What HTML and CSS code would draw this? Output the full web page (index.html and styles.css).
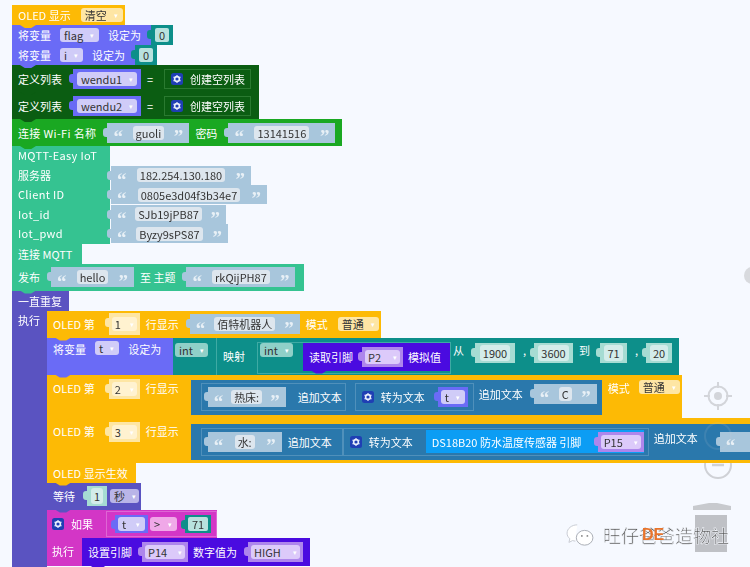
FILE: index.html
```html
<!DOCTYPE html>
<html lang="zh-CN">
<head>
    <meta charset="UTF-8" />
    <title>Mixly</title>
    <link rel="stylesheet" href="styles.css">
</head>
<body>

<svg class="defs" width="0" height="0">
    <symbol id="gear" viewBox="0 0 12 12">
        <rect width="12" height="12" rx="2.5" fill="#1f3fb4"/>
        <circle cx="6" cy="6" r="2.4" fill="none" stroke="#e8eefc" stroke-width="1.6"/>
        <path d="M6 2v1.4M6 8.6V10M2.500 4l1.200.7M8.300 7.300l1.200.7M2.500 8l1.200-.7M8.300 4.700l1.200-.7" stroke="#e8eefc" stroke-width="1.1"/>
    </symbol>
</svg>

<svg class="ctl minus" viewBox="0 0 30 30"><circle cx="15" cy="15" r="13" fill="none" stroke="#cfd1d6" stroke-width="2"/><path d="M9 15h12" stroke="#cfd1d6" stroke-width="2.500"/></svg>

<div class="ws">
    <div class="stack">
        <div class="blk yellow r20 w113"><span>OLED 显示</span><span class="dd y-dd ml10">清空</span></div>
        <div class="blk purple r20"><span>将变量</span><span class="dd p-dd ml8">flag</span><span class="ml8">设定为</span>
            <span class="num teal ml-end"><b>0</b></span></div>
        <div class="blk purple r20"><span>将变量</span><span class="dd p-dd ml8">i</span><span class="ml8">设定为</span>
            <span class="num teal ml-end"><b>0</b></span></div>
        <div class="blk dgreen r27 w247"><span>定义列表</span><span class="var ml11"><span class="dd p-dd">wendu1</span></span><span class="eq">=</span>
            <span class="outline dg-line"><svg class="gear"><use href="#gear"/></svg><span>创建空列表</span></span></div>
        <div class="blk dgreen r27 w247"><span>定义列表</span><span class="var ml11"><span class="dd p-dd">wendu2</span></span><span class="eq">=</span>
            <span class="outline dg-line"><svg class="gear"><use href="#gear"/></svg><span>创建空列表</span></span></div>
        <div class="blk green r27 w330"><span class="ls">连接 Wi-Fi 名称</span><span class="str ml11 w82"><i>“</i><em>guoli</em><i>”</i></span><span class="ml6">密码</span><span class="str ml11 w107"><i>“</i><em>13141516</em><i>”</i></span></div>

        <div class="mqtt">
            <div class="mq-row"><span class="mq-label ls">MQTT-Easy IoT</span></div>
            <div class="mq-row"><span class="mq-label">服务器</span><span class="str flat w140"><i>“</i><em>182.254.130.180</em><i>”</i></span></div>
            <div class="mq-row"><span class="mq-label ls">Client ID</span><span class="str flat w156"><i>“</i><em>0805e3d04f3b34e7</em><i>”</i></span></div>
            <div class="mq-row"><span class="mq-label ls">Iot_id</span><span class="str flat w115"><i>“</i><em>SJb19jPB87</em><i>”</i></span></div>
            <div class="mq-row"><span class="mq-label ls">Iot_pwd</span><span class="str flat w117"><i>“</i><em>Byzy9sPS87</em><i>”</i></span></div>
        </div>
        <div class="blk mint r20 w70"><span>连接 MQTT</span></div>
        <div class="blk mint r27 w292"><span>发布</span><span class="str ml11 w83"><i>“</i><em>hello</em><i>”</i></span><span class="ml6">至 主题</span><span class="str ml11 w109"><i>“</i><em>rkQijPH87</em><i>”</i></span></div>

        <div class="blk indigo r20 w57"><span>一直重复</span></div>
        <div class="loop">
            <div class="arm"><span>执行</span></div>
            <div class="stack">
                <div class="blk yellow r27 w334"><span>OLED 第</span><span class="val y-val ml14"><span class="dd y-dd">1</span></span><span class="ml6">行显示</span><span class="str ml11 w110"><i>“</i><em>佰特机器人</em><i>”</i></span><span class="ml6">模式</span><span class="dd y-dd ml10 w41">普通</span></div>

                <div class="blk purple tall37">
                    <span class="lift">将变量</span><span class="dd p-dd ml8 lift">t</span><span class="ml8 lift">设定为</span>
                    <div class="map">
                        <span class="dd t-dd">int</span>
                        <span class="split"></span>
                        <span class="map-label">映射</span>
                        <span class="outline t-line"><span class="dd t-dd">int</span>
                            <span class="blk violet pin"><span>读取引脚</span><span class="val v-val ml9 w41"><span class="dd v-dd">P2</span></span><span class="ml5">模拟值</span></span></span>
                        <span class="from">从</span><span class="val t-val ml11 w40"><b>1900</b></span><span class="dot">,</span><span class="val t-val w39"><b>3600</b></span><span class="to">到</span><span class="val t-val ml10 w27"><b>71</b></span><span class="dot">,</span><span class="val t-val w26"><b>20</b></span>
                    </div>
                </div>

                <div class="blk yellow tall43 w635"><span class="lift4">OLED 第</span><span class="val y-val slim ml14 lift4"><span class="dd y-dd">2</span></span><span class="ml6 lift4">行显示</span>
                    <div class="text-chain w411">
                        <span class="outline b-line w145"><span class="str w78"><i>“</i><em>热床:</em><i>”</i></span><span class="ml12">追加文本</span></span>
                        <span class="outline b-line w119 ml8"><svg class="gear"><use href="#gear"/></svg><span class="ml7">转为文本</span><span class="var small ml13"><span class="dd p-dd">t</span></span></span>
                        <span class="ml5 chain-up">追加文本</span><span class="str ml11 w63 chain-up"><i>“</i><em>C</em><i>”</i></span>
                    </div>
                    <span class="ml6 lift4">模式</span><span class="dd y-dd ml9 lift4 w41">普通</span>
                </div>

                <div class="blk yellow tall45 wide"><span class="lift4">OLED 第</span><span class="val y-val slim ml14 lift4"><span class="dd y-dd">3</span></span><span class="ml6 lift4">行显示</span>
                    <div class="text-chain wide-chain">
                        <span class="outline b-line w142"><span class="str w74"><i>“</i><em>水:</em><i>”</i></span><span class="ml6">追加文本</span></span>
                        <span class="outline b-line w306"><svg class="gear"><use href="#gear"/></svg><span class="ml7">转为文本</span><span class="sensor ml13"><span>DS18B20 防水温度传感器 引脚</span><span class="val v-val w46"><span class="dd v-dd">P15</span></span></span></span>
                        <span class="ml5 chain-up">追加文本</span><span class="str ml22 w82"><i>“</i><em>&nbsp;</em></span>
                    </div>
                </div>

                <div class="blk yellow r20 w89"><span>OLED 显示生效</span></div>
                <div class="blk indigo r27 w94"><span>等待</span><span class="val t-val ml12 w20"><b>1</b></span><span class="dd i-dd ml3 w29">秒</span></div>
                <div class="ifblk">
                    <div class="if-head"><svg class="gear"><use href="#gear"/></svg><span class="ml7">如果</span>
                        <span class="outline m-line"><span class="var t-var"><span class="dd p-dd">t</span></span><span class="dd m-dd ml2 w27">&gt;</span><span class="num teal small-num"><b>71</b></span></span></div>
                    <div class="if-body">
                        <span class="if-arm">执行</span>
                        <div class="blk violet r28 w228"><span>设置引脚</span><span class="val v-val ml10 w46"><span class="dd v-dd">P14</span></span><span class="ml5">数字值为</span><span class="val v-val ml11 w55"><span class="dd v-dd">HIGH</span></span></div>
                    </div>
                </div>
            </div>
        </div>
    </div>
</div>

<svg class="ctl locate" viewBox="0 0 30 30"><circle cx="15" cy="15" r="9.500" fill="none" stroke="#d3d5da" stroke-width="2"/><circle cx="15" cy="15" r="4" fill="#d3d5da"/><path d="M15 1v6M15 23v6M1 15h6M23 15h6" stroke="#d3d5da" stroke-width="2"/></svg>
<svg class="ctl plus" viewBox="0 0 30 30"><circle cx="15" cy="15" r="13" fill="none" stroke="#c9cbd0" stroke-width="2"/></svg>
<div class="side-knob"></div>
<svg class="ctl trash" viewBox="0 0 40 50"><path d="M1 4l16-3h8l14 3v4H1z" fill="#c8cace"/><rect x="3" y="13" width="32" height="37" fill="#bfc1c6"/></svg>
<div class="mark">
    <svg class="wx" viewBox="0 0 30 26"><path d="M12 2C6 2 1 6 1 11c0 2.500 1 4.500 3 6l-1 4 4-2c1 .4 2 .5 3 .6" fill="#fff" stroke="#c4c8d0"/><ellipse cx="20" cy="16" rx="9" ry="8" fill="#fff" stroke="#a4a8b0"/><circle cx="17" cy="14" r="1" fill="#888"/><circle cx="23" cy="14" r="1" fill="#888"/></svg>
    <span class="mark-text">旺仔爸爸造物社</span>
    <span class="mark-de">DE</span>
</div>

</body>
</html>
```

FILE: styles.css
```css
body {
    margin: 0;
    width: 750px;
    height: 567px;
    overflow: hidden;
    position: relative;
    background: #f6f9ff;
    font-family: "Noto Sans CJK SC", "Noto Sans", sans-serif;
    font-size: 11px;
    color: #fff;
}
.defs {
    position: absolute;
}
.ws {
    position: relative;
    padding: 5px 0 0 12px;
    height: 562px;
    overflow: hidden;
    filter: blur(0.35px);
}
.stack {
    display: flex;
    flex-direction: column;
    align-items: flex-start;
}

/* blocks */
.blk {
    display: flex;
    align-items: center;
    padding: 0 6px;
    box-sizing: border-box;
    position: relative;
    white-space: nowrap;
    flex-shrink: 0;
}
.blk::after {
    content: "";
    position: absolute;
    left: 8px;
    bottom: -3px;
    width: 16px;
    height: 3px;
    background: inherit;
    clip-path: polygon(0 0, 100% 0, 70% 100%, 30% 100%);
    z-index: 2;
}
.r20 { height: 20px; }
.r27 { height: 27px; }
.r28 { height: 28px; }
.tall37 { height: 37px; padding-right: 0; align-items: flex-start; padding-top: 4px; width: 632px; }
.tall43 { height: 43px; }
.tall45 { height: 45px; }
.w20 { width: 20px; }
.w26 { width: 26px; }
.w27 { width: 27px; }
.w29 { width: 29px; }
.w39 { width: 39px; }
.w40 { width: 40px; }
.w41 { width: 41px; }
.w46 { width: 46px; }
.w55 { width: 55px; }
.w57 { width: 57px; }
.w63 { width: 63px; }
.w70 { width: 70px; }
.w74 { width: 74px; }
.w78 { width: 78px; }
.w82 { width: 82px; }
.w83 { width: 83px; }
.w89 { width: 89px; }
.w94 { width: 94px; }
.w107 { width: 107px; }
.w109 { width: 109px; }
.w110 { width: 110px; }
.w113 { width: 113px; }
.w115 { width: 115px; }
.w117 { width: 117px; }
.w119 { width: 119px; }
.w140 { width: 140px; }
.w142 { width: 142px; }
.w145 { width: 145px; }
.w156 { width: 156px; }
.w228 { width: 228px; }
.w247 { width: 247px; }
.w292 { width: 292px; }
.w306 { width: 306px; }
.w330 { width: 330px; }
.w334 { width: 334px; }
.w411 { width: 411px; }
.w635 { width: 635px; }
.wide { width: 720px; }

.yellow { background: #fdba05; }
.purple { background: #6a6bf6; }
.dgreen { background: #0b5d12; }
.green { background: #1aa822; }
.mint { background: #35c391; }
.indigo { background: #5a53c1; }
.violet { background: #4a0be0; }

.ml2 { margin-left: 2px; }
.ml3 { margin-left: 3px; }
.ml5 { margin-left: 5px; }
.ml6 { margin-left: 6px; }
.ml7 { margin-left: 7px; }
.ml8 { margin-left: 9px; }
.ml9 { margin-left: 9px; }
.ml10 { margin-left: 10px; }
.ml11 { margin-left: 11px; }
.ml12 { margin-left: 12px; }
.ml13 { margin-left: 13px; }
.ml14 { margin-left: 14px; }
.ml22 { margin-left: 22px; }
.ls { letter-spacing: 0.35px; }
.lift { margin-top: -1px; }
.lift4 { align-self: flex-start; margin-top: 5px; }
.val.lift4 { margin-top: 4px; }

/* dropdown fields */
.dd {
    display: inline-flex;
    align-items: center;
    justify-content: space-between;
    box-sizing: border-box;
    height: 14px;
    padding: 0 5px 0 4px;
    border-radius: 3px;
    color: #333;
    gap: 7px;
    font-size: 11px;
}
.dd::after {
    content: "▾";
    font-size: 7px;
    color: #fff;
}
.y-dd { background: #fee6a4; }
.p-dd { background: #d0ccf8; }
.t-dd { background: #8fd0c8; }
.v-dd { background: #dccafa; }
.i-dd { background: #b9b5e8; }
.m-dd { background: #f0a8e8; }
.val .y-dd { background: #fff2d0; }

/* value sockets */
.val, .var, .num, .str {
    display: inline-flex;
    align-items: center;
    justify-content: center;
    position: relative;
    flex-shrink: 0;
    box-sizing: border-box;
}
.val::before, .var::before, .num::before, .str::before {
    content: "";
    position: absolute;
    left: -4px;
    top: 5px;
    width: 4px;
    height: 9px;
    border-radius: 3px 0 0 3px;
    background: inherit;
}
.val { height: 20px; padding: 0 3px; }
.val b, .num b { font-weight: 400; color: #333; }
.val .dd { padding: 0 3px; gap: 4px; }
.y-val { height: 22px; background: #fee6a4; width: 31px; }
.y-val.slim { height: 20px; }
.y-val .dd { width: 25px; }
.v-val { background: #ae86ec; }
.v-val .dd { width: 100%; }
.t-val { background: #a6dcd3; }
.t-val b { background: #d3ecea; padding: 0 3px; border-radius: 3px; }
.var { height: 20px; background: #6a6bf6; padding: 0 4px; width: 68px; }
.var .dd { width: 100%; }
.var.small { width: 30px; height: 20px; padding: 0 3px; }
.var.t-var { width: 33px; height: 18px; padding: 0 3px; }
.num { align-self: stretch; padding: 0 4px; width: 22px; }
.teal { background: #0d8f8a; }
.num b { background: #b8e2de; width: 14px; height: 14px; line-height: 14px; text-align: center; border-radius: 2px; }
.ml-end { margin-left: 10px; margin-right: -6px; }
.small-num { width: 26px; align-self: center; height: 18px; margin-left: 8px; padding: 0 3px; }
.small-num b { width: 20px; }

/* strings */
.str {
    height: 20px;
    background: #a8c6dc;
    justify-content: space-between;
    padding: 0 6px;
}
.str i {
    font-family: "Liberation Serif", serif;
    font-style: normal;
    font-weight: 700;
    font-size: 19px;
    line-height: 19px;
    height: 11px;
    color: #e8f0f6;
}
.str em {
    font-style: normal;
    color: #333;
    background: #dde6ee;
    border-radius: 3px;
    padding: 0 3px;
    height: 14px;
    line-height: 14px;
}
.flat { height: 19px; }

/* mqtt block */
.mqtt {
    display: flex;
    flex-direction: column;
    align-items: flex-start;
    width: 260px;
}
.mq-row {
    display: flex;
    height: 19.500px;
    align-items: stretch;
}
.mq-label {
    width: 98px;
    padding-left: 6px;
    box-sizing: border-box;
    background: #35c391;
    line-height: 19px;
}
.mq-row .str { margin-left: 1px; }

/* outlined statement inputs */
.eq {
    margin: 0 11px 0 6px;
}
.outline {
    display: inline-flex;
    align-items: center;
    box-sizing: border-box;
    border: 1px solid;
    flex-shrink: 0;
}
.dg-line { border-color: #2a7a30; height: 20px; width: 87px; gap: 7px; padding-left: 6px; }
.t-line {
    border-color: #3eaaa4;
    height: 32px;
    align-items: flex-start;
    padding-left: 2px;
    margin: -1px 0 0 12px;
    width: 194px;
}
.b-line { border-color: #4f90bb; height: 28px; padding-left: 6px; }
.m-line { border-color: #de66d4; height: 26px; width: 111px; padding-left: 8px; margin-left: 13px; }
.gear {
    width: 12px;
    height: 12px;
    flex-shrink: 0;
}

/* map block */
.map {
    background: #0d8f8a;
    display: flex;
    align-items: flex-start;
    margin: -4px 0 0 auto;
    height: 37px;
    width: 506px;
    padding: 5px 0 0 2px;
    box-sizing: border-box;
    white-space: nowrap;
    flex-shrink: 0;
}
.split {
    width: 1px;
    height: 37px;
    margin: -5px 0 0 8px;
    background: #3eaaa4;
}
.map-label { margin: 5px 0 0 6px; }
.pin {
    height: 28px;
    width: 147px;
    padding: 0 0 0 6px;
    margin: 0 0 0 10px;
}
.from { margin: -1px 0 0 2px; }
.to { margin: -1px 0 0 6px; }
.dot { margin: -1px 0 0; width: 19px; text-align: center; }
.map .t-dd { width: 33px; }

/* text joins */
.text-chain {
    background: #2a78ac;
    height: 35px;
    display: flex;
    align-items: center;
    box-sizing: border-box;
    flex-shrink: 0;
    align-self: flex-start;
    margin: 5px 0 0 12px;
    padding-left: 10px;
}
.wide-chain { width: 600px; height: 36px; margin-top: 6px; }
.chain-up { margin-top: -7px; }
.sensor {
    background: #0c9df4;
    height: 23px;
    display: inline-flex;
    align-items: center;
    justify-content: space-between;
    padding-left: 6px;
    width: 218px;
    box-sizing: border-box;
    white-space: nowrap;
}

/* loop */
.loop {
    display: flex;
    align-items: stretch;
}
.arm {
    width: 35px;
    background: #5a53c1;
    padding: 1px 0 0 6px;
    box-sizing: border-box;
    height: 256px;
    flex-shrink: 0;
}
.ifblk {
    position: relative;
}
.if-head {
    display: flex;
    align-items: center;
    background: #d336c6;
    width: 170px;
    height: 28px;
    padding-left: 5px;
    box-sizing: border-box;
    white-space: nowrap;
}
.if-body {
    display: flex;
    align-items: stretch;
}
.if-arm {
    width: 35px;
    background: #d336c6;
    padding: 5px 0 0 5px;
    box-sizing: border-box;
    white-space: nowrap;
    flex-shrink: 0;
}

/* workspace controls */
.ctl {
    position: absolute;
}
.locate { left: 703px; top: 381px; width: 30px; height: 30px; }
.plus { left: 703px; top: 421px; width: 30px; height: 30px; opacity: 0.12; }
.minus { left: 703px; top: 450px; width: 30px; height: 30px; }
.trash { left: 692px; top: 502px; width: 40px; height: 50px; }
.side-knob {
    position: absolute;
    left: 744px;
    top: 267px;
    width: 16px;
    height: 17px;
    border-radius: 50%;
    background: #d8dade;
}

/* watermark */
.mark {
    position: absolute;
    left: 566px;
    top: 523px;
    display: flex;
    align-items: center;
}
.wx {
    width: 28px;
    height: 24px;
}
.mark-text {
    margin-left: 9px;
    font-size: 18px;
    line-height: 24px;
    color: #555;
    white-space: nowrap;
    -webkit-text-stroke: 0.6px #f6f9ff;
}
.mark-de {
    position: absolute;
    left: 76px;
    top: 3px;
    font-family: "Liberation Sans", sans-serif;
    font-weight: 700;
    font-size: 16px;
    line-height: 18px;
    color: #e8742c;
}
```
